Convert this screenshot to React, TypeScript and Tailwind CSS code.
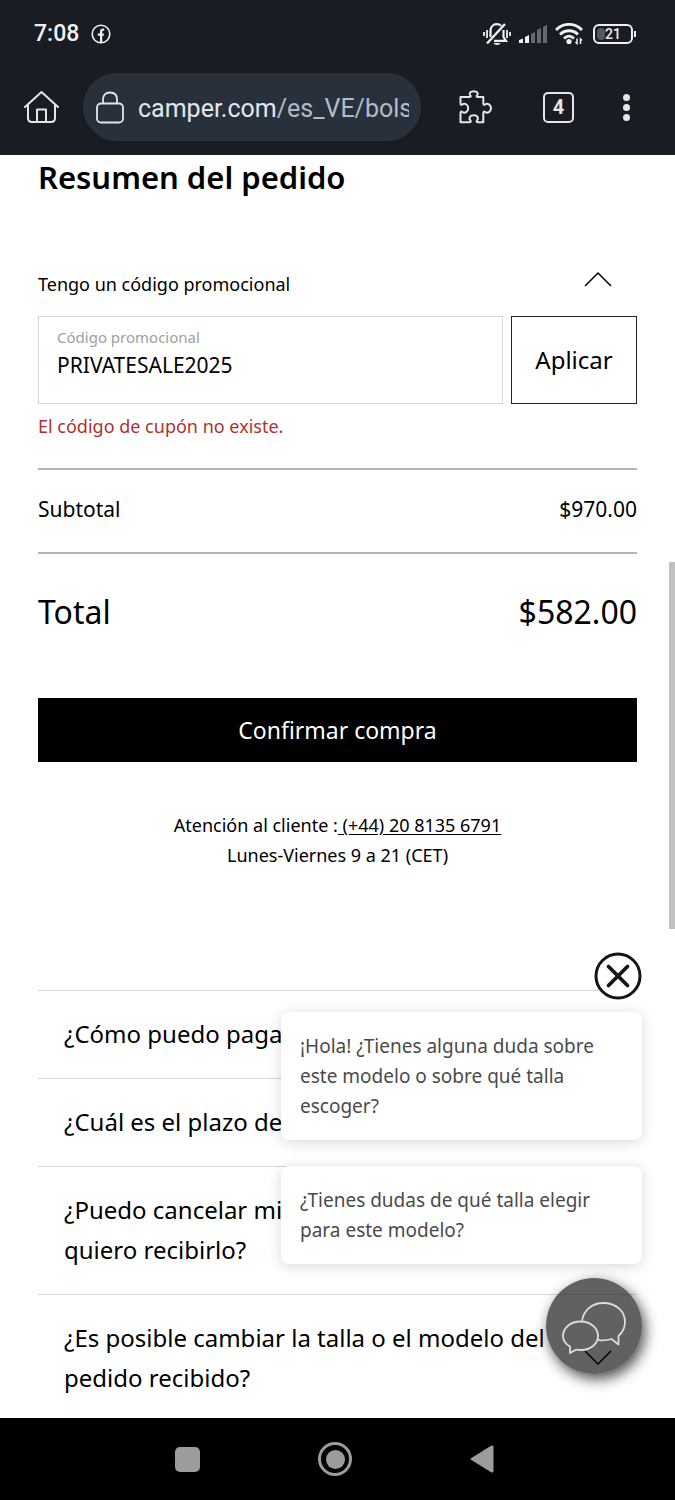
import { useState } from "react";

const faqs = [
    "¿Cómo puedo pagar?",
    "¿Cuál es el plazo de entrega?",
    "¿Puedo cancelar mi pedido si al final no quiero recibirlo?",
    "¿Es posible cambiar la talla o el modelo del pedido recibido?",
];

const Chevron = ({ up = false }: { up?: boolean }) => (
    <svg viewBox="0 0 28 16" className={up ? "w-7 h-4 shrink-0" : "w-7 h-4 shrink-0 rotate-180"} fill="none" stroke="currentColor" strokeWidth="1.5">
        <path d="M1 15 14 2l13 13" />
    </svg>
);

const StatusBar = () => (
    <div className="flex h-[68px] items-center justify-between pl-[34px] pr-[39px] text-[#f0f1f4]">
        <div className="flex items-center gap-3">
            <span className="text-[23px] font-medium">7:08</span>
            <svg viewBox="0 0 20 20" className="size-5" fill="none" stroke="currentColor" strokeWidth="1.6">
                <circle cx="10" cy="10" r="8.8" />
                <path d="M13.2 5.6h-1c-1.4 0-2.1.8-2.1 2.2v10.4M6.8 10.6h6" strokeWidth="2.2" />
            </svg>
        </div>
        <div className="flex items-center">
            <svg viewBox="0 0 28 24" className="mr-2 h-6 w-7" fill="none" stroke="currentColor" strokeWidth="1.8">
                <path d="M1 10v4M4 8v8M27 10v4M24 8v8" />
                <path d="M7.5 15V9c0-3.8 2.5-6.8 6.3-6.8 1.8 0 3.2.5 4.4 1.6M20.5 8v7l2.5 3.8H11" strokeWidth="2.2" />
                <path d="M4 21.5 22 2" strokeWidth="2.4" />
                <path d="M10.5 21h7c-1 2.5-6 2.5-7 0Z" fill="currentColor" stroke="none" />
            </svg>
            <svg viewBox="0 0 28 20" className="mr-2 h-5 w-7" fill="currentColor">
                <path d="M0 16l4-1.5V19H0zM6 13l4-2v8H6z" />
                <path d="M12 10l4-2v11h-4zM18 6l4-2v15h-4zM24 3l4-2.5V19h-4z" opacity=".36" />
            </svg>
            <svg viewBox="0 0 28 22" className="mr-2.5 h-[22px] w-7" fill="none" stroke="currentColor" strokeWidth="2.8">
                <path d="M1 7C8-.5 20-.5 27 7M5 11.5c5-5 13-5 18 0M9 15.5c3-3 7-3 10 0" />
                <circle cx="14" cy="18.5" r="2.6" fill="currentColor" stroke="none" />
                <path d="M22 15.5v5l-1.5-1.5M25.5 21v-5l1.5 1.5" strokeWidth="1.5" />
            </svg>
            <div className="flex items-center">
                <div className="relative flex h-5 w-10 items-center justify-center rounded-md border-2 border-current text-sm font-medium">
                    <span className="absolute inset-y-0.5 left-0.5 w-2 rounded-sm bg-[#56585c]" />
                    <span className="relative">21</span>
                </div>
                <span className="ml-px h-1.5 w-0.5 bg-current" />
            </div>
        </div>
    </div>
);

const Toolbar = () => (
    <div className="flex items-center pt-[5px] pb-3.5 pl-6 pr-[45px] text-[#e4e6ea]">
        <button aria-label="Inicio">
            <svg viewBox="0 0 35 34" className="h-[34px] w-[35px]" fill="none" stroke="currentColor" strokeWidth="2" strokeLinecap="round" strokeLinejoin="round">
                <path d="M1 17 17.5 2 34 17M4 14.5V28c0 2.5 1.2 4 4 4h19c2.8 0 4-1.5 4-4V14.5M13 32V19.5h9V32" />
            </svg>
        </button>
        <button className="ml-6 flex h-[68px] min-w-0 flex-1 items-center rounded-full bg-[#28313b] pl-[13px] pr-3">
            <svg viewBox="0 0 28 33" className="mr-3.5 h-[33px] w-7 shrink-0" fill="none" stroke="currentColor" strokeWidth="1.8">
                <rect x="1" y="12.5" width="26" height="19" rx="4" />
                <path d="M7 12.5v-4C7 4 9.5 1.5 14 1.5S21 4 21 8.5v4" />
            </svg>
            <span className="min-w-0 flex-1 overflow-hidden pt-1 text-left text-[25px] whitespace-nowrap text-[#b4bac8]">
                <span className="text-[#e4e6f0]">camper.com</span>/es_VE/bolsa
            </span>
        </button>
        <button aria-label="Extensiones" className="ml-[38px]">
            <svg viewBox="0 0 34 34" className="size-[34px]" fill="none" stroke="currentColor" strokeWidth="2" strokeLinejoin="round">
                <path d="M1.5 7H10.3C12 7 12.2 6.3 11.2 5.2C9.6 3.2 11.5 1.2 14.7 1.2S19.8 3.2 18.2 5.2C17.2 6.3 17.4 7 19.1 7H24.3V13.2C24.3 15 25 15.2 26.2 14.4C28.4 12.6 32 14.6 32 18.2S28.4 23.8 26.2 22C25 21.2 24.3 21.4 24.3 23.2V32.3H19.1C17.4 32.3 17.2 31.4 18.2 30.2C20 28 18.4 25.2 14.7 25.2S9.4 28 11.2 30.2C12.2 31.4 12 32.3 10.3 32.3H1.5V23.2C1.5 21.4 2.2 21.2 3.4 22C5.8 23.8 9.2 21.8 9.2 18.2S5.8 12.6 3.4 14.4C2.2 15.2 1.5 15 1.5 13.2Z" />
            </svg>
        </button>
        <button className="ml-[50px] flex h-[31px] w-[31px] items-center justify-center rounded-[5px] border-2 border-current text-xl font-bold">
            4
        </button>
        <button aria-label="Menú" className="ml-[49px] flex flex-col gap-[3px]">
            <span className="size-[7px] rounded-full bg-current" />
            <span className="size-[7px] rounded-full bg-current" />
            <span className="size-[7px] rounded-full bg-current" />
        </button>
    </div>
);

const ChatWidget = () => (
    <div className="absolute right-[33px] bottom-11 flex w-[361px] flex-col items-end text-[19px] leading-[30px] text-[#4a4a4a]">
        <button aria-label="Cerrar" className="mb-3 rounded-full bg-white text-[#151515]">
            <svg viewBox="0 0 48 48" className="size-12" fill="none" stroke="currentColor" strokeWidth="3" strokeLinecap="round">
                <circle cx="24" cy="24" r="22" />
                <path d="m14.5 14.5 19 19m0-19-19 19" strokeWidth="3.8" />
            </svg>
        </button>
        <p className="mb-[26px] w-full rounded-lg bg-white p-[19px] shadow-[0_2px_14px_rgba(0,0,0,0.16)]">
            ¡Hola! ¿Tienes alguna duda sobre este modelo o sobre qué talla escoger?
        </p>
        <p className="mb-3.5 w-full rounded-lg bg-white p-[19px] shadow-[0_2px_14px_rgba(0,0,0,0.16)]">
            ¿Tienes dudas de qué talla elegir para este modelo?
        </p>
        <button aria-label="Abrir chat" className="flex size-24 items-center justify-center rounded-full bg-black/62 pt-1 shadow-[3px_5px_14px_rgba(0,0,0,0.7)]">
            <svg viewBox="0 0 64 52" className="h-[52px] w-16" fill="none" stroke="#dcdcdc" strokeWidth="1.8" strokeLinejoin="round">
                <path d="M20 19.5C21 8.5 30 1 41.5 1 54 1 63 9 63 20c0 6-2.5 10.5-6.5 14v8.5l-7-5.5c-4.5 1.5-9.5 1.8-13.5.8" />
                <path d="M18.5 19.5C28.5 19.5 36 26 36 34s-7.5 14-17 14c-1.5 0-3 0-4.5-.5L8 51v-6.5C3.5 42 1 38.5 1 34c0-8 7.5-14.5 17.5-14.5Z" />
            </svg>
        </button>
    </div>
);

const OrderSummary = () => {
    const [code, setCode] = useState<string>("PRIVATESALE2025");
    const [isOpen, setIsOpen] = useState<boolean>(true);

    return (
        <section>
            <h1 className="text-[31px] leading-[44px] font-semibold">Resumen del pedido</h1>
            <button onClick={() => setIsOpen(!isOpen)} className="mt-[60px] flex w-full items-center justify-between pr-[25px] text-lg leading-[30px]">
                <span className="pt-2.5">Tengo un código promocional</span>
                <Chevron up={isOpen} />
            </button>
            {isOpen && <form className="mt-[17px]" onSubmit={(e) => e.preventDefault()}>
                <div className="flex h-[88px] gap-2">
                    <div className="flex min-w-0 flex-1 flex-col border border-[#d6d6d6] px-[18px] pt-2.5">
                        <label htmlFor="promo" className="text-[15px] leading-5 text-[#a0a0a0]">Código promocional</label>
                        <input id="promo" value={code} onChange={(e) => setCode(e.target.value)} className="w-full text-[21px] leading-9 outline-none" />
                    </div>
                    <button className="w-[126px] border border-[#222] text-2xl">Aplicar</button>
                </div>
                <p className="mt-1 text-lg leading-9 text-[#b3302a]">El código de cupón no existe.</p>
            </form>}
            <div className="mt-6 flex justify-between border-y-2 border-[#b4b4b4] pt-[18px] pb-[22px] text-[21px] leading-[42px]">
                <span>Subtotal</span>
                <span>$970.00</span>
            </div>
            <div className="flex justify-between py-9 text-[32px] leading-[44px]">
                <span>Total</span>
                <span>$582.00</span>
            </div>
            <button className="mt-7 h-16 w-full bg-black text-[23px] text-white">Confirmar compra</button>
            <p className="mt-12 text-center text-lg leading-[30px]">
                Atención al cliente :<a href="tel:+442081356791" className="underline underline-offset-2"> (+44) 20 8135 6791</a>
                <br />
                Lunes-Viernes 9 a 21 (CET)
            </p>
        </section>
    );
};

export default function App() {
    return (
        <div className="flex h-screen flex-col bg-white text-black">
            <header className="bg-[#191c22] font-[Roboto,sans-serif]">
                <StatusBar />
                <Toolbar />
            </header>
            <div className="relative min-h-0 flex-1 overflow-hidden font-['Noto_Sans',sans-serif]">
                <main className="px-[38px]">
                    <OrderSummary />
                    <ul className="mt-[120px]">
                        {faqs.map((question) => (
                            <li key={question} className="border-t border-[#d9d9d9]">
                                <button className="flex w-full items-center justify-between pt-[23px] pb-6 pl-[26px] pr-[25px] text-left text-2xl leading-10">
                                    <span className="w-[490px]">{question}</span>
                                    <Chevron />
                                </button>
                            </li>
                        ))}
                    </ul>
                </main>
                <div className="absolute top-[407px] right-0 h-[367px] w-1.5 bg-[#c1c1c1]" />
                <ChatWidget />
            </div>
            <nav className="flex h-[82px] shrink-0 items-center justify-center gap-[118px] bg-black pr-1.5 text-[#9c9c9c]">
                <button aria-label="Recientes" className="size-[25px] rounded-[5px] bg-current" />
                <button aria-label="Inicio" className="flex size-[34px] items-center justify-center rounded-full border-3 border-current">
                    <span className="size-[19px] rounded-full bg-current" />
                </button>
                <button aria-label="Atrás">
                    <svg viewBox="0 0 24 28" className="h-7 w-6" fill="currentColor">
                        <path d="M1 13.2 21.5.5Q23.5 0 23.5 2v24q0 2-2 1.5L1 14.8Q0 14 1 13.2Z" />
                    </svg>
                </button>
            </nav>
        </div>
    );
}
